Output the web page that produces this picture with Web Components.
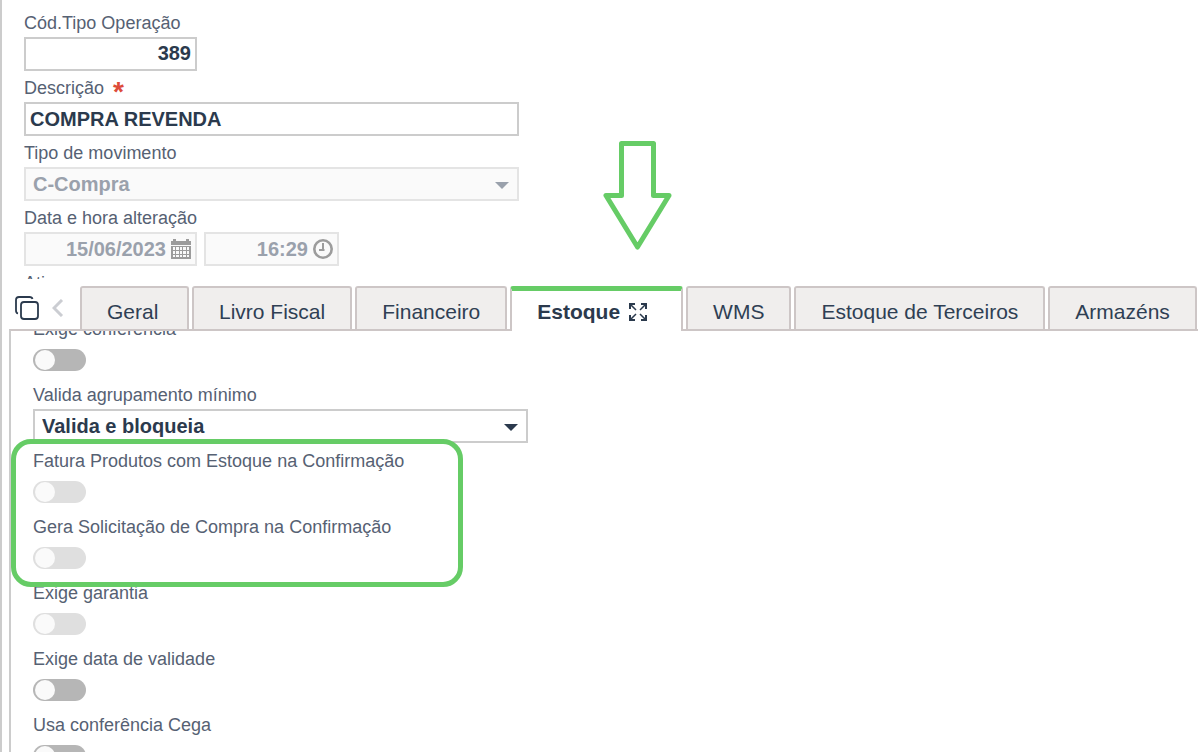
<!DOCTYPE html>
<html lang="pt-BR">
<head>
<meta charset="utf-8">
<meta name="viewport" content="width=device-width, initial-scale=1">
<title>Tipo de Operação</title>
<style>
body { margin: 0; font-family: "Liberation Sans", Arial, sans-serif; background: #fff; }
</style>
</head>
<body>
<operation-page></operation-page>

<script>
const define = (name, html, setup) => {
  const template = document.createElement('template');
  template.innerHTML = html;
  customElements.define(name, class extends HTMLElement {
    connectedCallback() {
      if (this.shadowRoot) return;
      const root = this.attachShadow({ mode: 'open' });
      root.append(template.content.cloneNode(true));
      if (setup) setup(this, root);
    }
  });
};

// Shared look of the caption above a control
const labelCss = `
  :host { display: block; }
  * { box-sizing: border-box; }
  label { display: block; padding-top: var(--label-gap, 4px); font-size: 18px; line-height: 28px; color: #566173; white-space: nowrap; }
`;

define('text-field', `
<style>${labelCss}
  :host { width: 495px; max-width: 100%; }
  :host([size="code"]) { width: 173px; }
  input { display: block; width: 100%; height: 34px; margin: 0; padding: 0 4px; border: 2px solid #ccc; border-radius: 0;
    background: #fff; color: #2b3a4d; font: bold 20px "Liberation Sans", Arial, sans-serif; outline: none; }
  :host([size="code"]) input { text-align: right; padding-bottom: 2px; }
  .required { display: none; margin-left: 4px; color: #dd4b39; font: bold 28px "Liberation Sans", Arial, sans-serif; line-height: 0; vertical-align: -7px; }
  :host([required]) .required { display: inline; }
</style>
<label for="c"><span class="name"></span> <span class="required">*</span></label>
<input id="c" type="text">`, (host, root) => {
  root.querySelector('.name').textContent = host.getAttribute('label');
  root.querySelector('input').value = host.getAttribute('value');
});

define('select-field', `
<style>${labelCss}
  :host { width: 495px; max-width: 100%; }
  .box { position: relative; color: #2b3a4d; }
  select { appearance: none; display: block; width: 100%; height: 34px; margin: 0; padding: 0 32px 0 7px; border: 2px solid #ccc; border-radius: 0;
    background: #fff; color: inherit; font: bold 20px "Liberation Sans", Arial, sans-serif; opacity: 1; outline: none; }
  svg { position: absolute; right: 10px; top: 15px; pointer-events: none; }
  :host([disabled]) .box { color: #9aa1ac; }
  :host([disabled]) select { border-color: #e4e4e4; background: #fafafa; }
</style>
<label for="c"></label>
<div class="box">
  <select id="c"><option></option></select>
  <svg width="14" height="7" viewBox="0 0 14 7" aria-hidden="true"><path d="M0 0h14L7 7z" fill="currentColor"/></svg>
</div>`, (host, root) => {
  root.querySelector('label').textContent = host.getAttribute('label');
  root.querySelector('option').textContent = host.getAttribute('value');
  root.querySelector('select').disabled = host.hasAttribute('disabled');
});

define('date-time-field', `
<style>${labelCss}
  .row { display: flex; gap: 7px; }
  .box { display: flex; align-items: center; height: 34px; padding: 0 4px 0 0; border: 2px solid #e4e4e4; background: #fafafa; }
  .date { width: 173px; }
  .time { width: 135px; }
  input { flex: 1; min-width: 0; height: 32px; margin: 0; padding: 0 5px 0 0; border: 0; background: none; text-align: right;
    color: #9aa1ac; font: bold 20px "Liberation Sans", Arial, sans-serif; }
  svg { flex: none; display: block; }
</style>
<label for="d"></label>
<div class="row">
  <div class="box date">
    <input id="d" type="text" disabled>
    <svg width="20" height="22" viewBox="0 0 20 22" aria-hidden="true">
      <path d="M0 3h2V1h3v2h10V1h3v2h2v4H0z" fill="#9c9c9c"/>
      <path d="M0 8h20v13H0z" fill="#9c9c9c"/>
      <path fill="#fafafa" d="M2 9h2v3H2zM5 9h3v3H5zM9 9h2v3H9zM12 9h3v3h-3zM16 9h2v3h-2zM2 13h2v3H2zM5 13h3v3H5zM9 13h2v3H9zM12 13h3v3h-3zM16 13h2v3h-2zM2 17h2v2H2zM5 17h3v2H5zM9 17h2v2H9zM12 17h3v2h-3zM16 17h2v2h-2z"/>
    </svg>
  </div>
  <div class="box time">
    <input type="text" aria-label="Hora" disabled>
    <svg width="20" height="20" viewBox="0 0 20 20" aria-hidden="true">
      <circle cx="10" cy="10" r="8.7" fill="none" stroke="#9c9c9c" stroke-width="2.6"/>
      <path d="M10 4v7M6 11h5.500" fill="none" stroke="#9c9c9c" stroke-width="2"/>
    </svg>
  </div>
</div>`, (host, root) => {
  root.querySelector('label').textContent = host.getAttribute('label');
  const [date, time] = root.querySelectorAll('input');
  date.value = host.getAttribute('date');
  time.value = host.getAttribute('time');
});

define('switch-field', `
<style>${labelCss}
  .box { display: flex; align-items: center; height: 34px; }
  input { appearance: none; display: block; width: 53px; height: 22px; margin: 0; padding: 1px 2px; border: 0; border-radius: 11px; background: #b6b6b6; }
  input::before { content: ""; display: block; width: 20px; height: 20px; border-radius: 50%; background: #fafafa; }
  input:checked::before { margin-left: auto; }
  input:disabled { background: #dfdfdf; }
</style>
<label for="c"></label>
<div class="box"><input id="c" type="checkbox" role="switch"></div>`, (host, root) => {
  root.querySelector('label').textContent = host.getAttribute('label');
  root.querySelector('input').disabled = host.hasAttribute('disabled');
});

define('tab-item', `
<style>
  :host { display: block; flex: none; position: relative; height: 43px; }
  :host([active]) { height: 45px; z-index: 1; }
  button { box-sizing: border-box; display: flex; align-items: center; gap: 9px; height: 100%; margin: 0; padding: 7px 25px 0;
    border: 2px solid #cdc6c6; border-bottom: 0; border-radius: 3px 3px 0 0; background: #f0eeed; color: #2f3f54;
    font: 21px "Liberation Sans", Arial, sans-serif; white-space: nowrap; }
  :host(:first-of-type) button { min-width: 109px; }
  :host([active]) button { padding: 2px 34px 0 25px; border-top: 5px solid #66cc66; background: #fff; color: #2b3a4d; font-weight: bold; }
  svg { display: none; }
  :host([active]) svg { display: block; }
</style>
<button type="button" role="tab"><slot></slot>
  <svg width="18" height="18" viewBox="0 0 18 18" fill="none" stroke="#2b3a4d" stroke-width="2" aria-hidden="true">
    <path d="M1 6V1h5M12 1h5v5M17 12v5h-5M6 17H1v-5"/>
    <path d="M1 1l6 6M17 1l-6 6M17 17l-6-6M1 17l6-6" stroke-width="1.5"/>
  </svg>
</button>
<slot name="pointer"></slot>`, (host, root) => {
  root.querySelector('button').setAttribute('aria-selected', host.hasAttribute('active'));
});

define('pointer-arrow', `
<style>
  :host { position: absolute; left: 93px; bottom: calc(100% + 36px); pointer-events: none; }
  svg { display: block; }
</style>
<svg width="69" height="109" viewBox="0 0 69 109" aria-hidden="true">
  <path d="M18.500 2.500h32v52H66L34.500 106 3 54.500h15.500z" fill="none" stroke="#66cc66" stroke-width="5" stroke-linejoin="round"/>
</svg>`);

define('tab-bar', `
<style>
  :host { display: flex; align-items: flex-start; gap: 3px; height: 45px; padding-left: 13px; }
  .tools { display: flex; flex: none; width: 62px; height: 43px; }
  button { display: block; margin: 0; padding: 0; border: 0; background: none; }
  .copy { width: 24px; }
  .prev { width: 38px; }
  svg { display: block; margin: auto; }
</style>
<div class="tools">
  <button class="copy" type="button" aria-label="Copiar">
    <svg width="24" height="24" viewBox="0 0 24 24" fill="none" stroke="#2b3a4d" stroke-width="1.8" aria-hidden="true">
      <rect x="6" y="6" width="17" height="17" rx="3"/>
      <path d="M3 17.500Q1 17 1 14.500V4a3 3 0 0 1 3-3h10.500Q17 1 17.500 3" stroke-width="1.800"/>
    </svg>
  </button>
  <button class="prev" type="button" aria-label="Abas anteriores">
    <svg width="12" height="18" viewBox="0 0 12 18" fill="none" stroke="#cbcdd2" stroke-width="3" aria-hidden="true"><path d="M10 1L2 9l8 8"/></svg>
  </button>
</div>
<slot></slot>`);

define('highlight-group', `
<style>
  :host { display: block; position: relative; }
  .ring { position: absolute; z-index: 1; box-sizing: border-box; left: -22px; top: -4px; bottom: -12px; width: 452px; border: 5px solid #66cc66; border-radius: 20px; pointer-events: none; }
</style>
<slot></slot><div class="ring"></div>`);

define('operation-page', `
<style>
  :host { box-sizing: border-box; display: flex; flex-direction: column; height: 100vh; overflow: hidden; border-left: 2px solid #ccc; }
  .summary { --label-gap: 3px; box-sizing: border-box; flex: none; height: 279px; padding: 6px 22px 0; overflow: hidden; }
  tab-bar { flex: none; margin-top: 7px; }
  .panel { flex: 1; min-height: 0; overflow: hidden; margin: -2px 0 0 7px; padding-left: 22px; border-top: 2px solid #cdc6c6; border-left: 2px solid #ccc; }
  .list { margin-top: -20px; }
</style>
<section class="summary">
  <text-field label="Cód.Tipo Operação" value="389" size="code"></text-field>
  <text-field label="Descrição" value="COMPRA REVENDA" required></text-field>
  <select-field label="Tipo de movimento" value="C-Compra" disabled></select-field>
  <date-time-field label="Data e hora alteração" date="15/06/2023" time="16:29"></date-time-field>
  <switch-field label="Ativo"></switch-field>
</section>
<tab-bar role="tablist">
  <tab-item>Geral</tab-item>
  <tab-item>Livro Fiscal</tab-item>
  <tab-item>Financeiro</tab-item>
  <tab-item active>Estoque<pointer-arrow slot="pointer"></pointer-arrow></tab-item>
  <tab-item>WMS</tab-item>
  <tab-item>Estoque de Terceiros</tab-item>
  <tab-item>Armazéns</tab-item>
</tab-bar>
<section class="panel">
  <div class="list">
    <switch-field label="Exige conferência"></switch-field>
    <select-field label="Valida agrupamento mínimo" value="Valida e bloqueia"></select-field>
    <highlight-group>
      <switch-field label="Fatura Produtos com Estoque na Confirmação" disabled></switch-field>
      <switch-field label="Gera Solicitação de Compra na Confirmação" disabled></switch-field>
    </highlight-group>
    <switch-field label="Exige garantia" disabled></switch-field>
    <switch-field label="Exige data de validade"></switch-field>
    <switch-field label="Usa conferência Cega"></switch-field>
  </div>
</section>`);
</script>
</body>
</html>
